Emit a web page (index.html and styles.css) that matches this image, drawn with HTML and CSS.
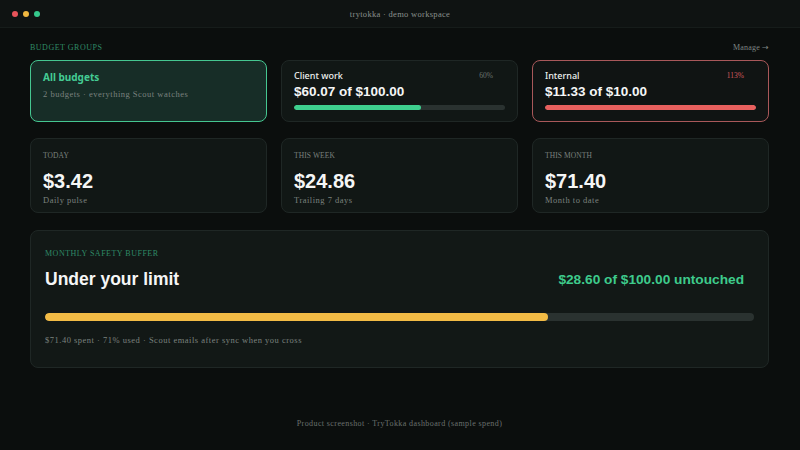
FILE: index.html
```html
<!DOCTYPE html>
<html>
<head>
<meta charset="utf-8">
<link rel="stylesheet" href="styles.css">
</head>
<body>
<div class="titlebar">
  <div class="dots"><span class="dot red"></span><span class="dot yellow"></span><span class="dot green"></span></div>
  <div class="wintitle">trytokka · demo workspace</div>
</div>
<main class="main">
  <div class="sechead">
    <span class="eyebrow">BUDGET GROUPS</span>
    <span class="manage">Manage <span class="arrow">→</span></span>
  </div>
  <div class="grid">
    <div class="card group active">
      <div class="gname green-t">All budgets</div>
      <div class="small">2 budgets · everything Scout watches</div>
    </div>
    <div class="card group">
      <div class="ghead"><span class="gname">Client work</span><span class="pct">60%</span></div>
      <div class="gamount">$60.07 of $100.00</div>
      <div class="track"><div class="fill fill-green" style="width:60%"></div></div>
    </div>
    <div class="card group over">
      <div class="ghead"><span class="gname">Internal</span><span class="pct pct-red">113%</span></div>
      <div class="gamount">$11.33 of $10.00</div>
      <div class="track"><div class="fill fill-red" style="width:100%"></div></div>
    </div>
  </div>
  <div class="grid stats">
    <div class="card stat">
      <div class="label">TODAY</div>
      <div class="big">$3.42</div>
      <div class="small">Daily pulse</div>
    </div>
    <div class="card stat">
      <div class="label">THIS WEEK</div>
      <div class="big">$24.86</div>
      <div class="small">Trailing 7 days</div>
    </div>
    <div class="card stat">
      <div class="label">THIS MONTH</div>
      <div class="big">$71.40</div>
      <div class="small">Month to date</div>
    </div>
  </div>
  <div class="card buffer">
    <div class="eyebrow">MONTHLY SAFETY BUFFER</div>
    <div class="bufhead">
      <div class="buftitle">Under your limit</div>
      <div class="bufright">$28.60 of $100.00 untouched</div>
    </div>
    <div class="track thick"><div class="fill fill-yellow" style="width:71%"></div></div>
    <div class="small">$71.40 spent · 71% used · Scout emails after sync when you cross</div>
  </div>
  <div class="footer">Product screenshot · TryTokka dashboard (sample spend)</div>
</main>
</body>
</html>
```
FILE: styles.css
```css
* { box-sizing: border-box; }
html, body { margin: 0; padding: 0; }
body {
  width: 800px; height: 450px; overflow: hidden;
  background: #0b0e0d;
  color: #f2f4f3;
  font-family: "Liberation Sans", Arial, sans-serif;
}
.titlebar {
  height: 28px;
  display: flex; align-items: center;
  position: relative;
  background: #0f1312;
  border-bottom: 1px solid #161c1a;
  padding: 0 12px;
}
.dots { display: flex; gap: 5px; }
.dot { width: 6px; height: 6px; border-radius: 50%; display: block; }
.dot.red { background: #e8545a; }
.dot.yellow { background: #f0b740; }
.dot.green { background: #35c98c; }
.wintitle {
  position: absolute; left: 0; right: 0; top: 9px; text-align: center;
  font-family: "Liberation Serif", serif; font-size: 8.5px; letter-spacing: 0.3px;
  color: #8a908d;
}
.main { padding: 12px 31px 0 30px; }
.sechead { display: flex; justify-content: space-between; align-items: center; height: 14px; margin-bottom: 6px; }
.eyebrow {
  font-family: "Liberation Serif", serif; font-size: 8px; letter-spacing: 0.5px;
  color: #2f8a66;
}
.manage { font-family: "Liberation Serif", serif; font-size: 8px; color: #7d8582; letter-spacing: 0.2px; }
.arrow { font-family: "DejaVu Sans", sans-serif; font-size: 8px; }
.grid { display: grid; grid-template-columns: repeat(3, 1fr); gap: 14px; }
.card {
  background: #111715;
  border: 1px solid #1f2725;
  border-radius: 8px;
}
.group { height: 62px; padding: 8px 12px 0 12px; }
.group.active { background: #172d27; border-color: #45c791; padding-top: 9px; }
.group.over { border-color: #a9585a; background: #101413; }
.ghead { display: flex; justify-content: space-between; align-items: center; padding-right: 12px; height: 12px; }
.gname { font-family: "Noto Sans", sans-serif; font-size: 9px; font-weight: 500; color: #eef1ef; }
.active .gname { font-size: 10px; font-weight: 700; }
.green-t { color: #44cc94 !important; }
.pct { font-family: "Liberation Serif", serif; font-size: 7.5px; color: #6c7470; }
.pct-red { color: #d35b5f; }
.gamount { font-size: 13.5px; font-weight: 700; margin-top: 3px; color: #f5f6f6; }
.track { height: 5px; background: #2a3230; border-radius: 3px; margin-top: 6px; overflow: hidden; }
.fill { height: 100%; border-radius: 3px; }
.fill-green { background: #3ecf8e; }
.fill-red { background: #e8605e; }
.fill-yellow { background: #f2bb45; }
.small {
  font-family: "Liberation Serif", serif; font-size: 8.5px; letter-spacing: 0.5px;
  color: #7b827f;
}
.active .small { margin-top: 5px; }
.stats { margin-top: 16px; }
.stat { height: 75px; padding: 12px 12px 0 12px; }
.label { font-family: "Liberation Serif", serif; font-size: 7.5px; color: #7a817e; letter-spacing: 0.1px; }
.big { font-size: 20px; font-weight: 700; margin-top: 9px; line-height: 24px; color: #f5f6f6; }
.stat .small { margin-top: 2px; }
.buffer { margin-top: 17px; height: 138px; padding: 18px 14px 0 14px; background: #121816; }
.bufhead { display: flex; justify-content: space-between; align-items: center; margin-top: 11px; padding-right: 10px; }
.buftitle { font-size: 17.5px; font-weight: 700; color: #f5f6f6; }
.bufright { font-size: 13.7px; font-weight: 700; color: #3ecb8c; }
.track.thick { height: 8px; border-radius: 4px; margin-top: 23px; }
.fill-yellow { border-radius: 4px; }
.buffer .small { margin-top: 14px; }
.footer {
  text-align: center; margin-top: 51px;
  font-family: "Liberation Serif", serif; font-size: 8px; letter-spacing: 0.4px; color: #6a716e;
}
```
